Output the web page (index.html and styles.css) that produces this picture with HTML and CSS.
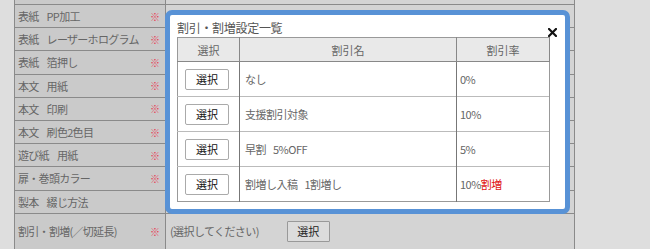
FILE: index.html
```html
<!DOCTYPE html>
<html lang="ja">
<head>
  <meta charset="UTF-8">
  <title>割引・割増設定一覧</title>
  <link rel="stylesheet" href="styles.css">
</head>
<body>
  <div class="sheet">
    <div class="row stub"><div class="label"></div><div class="value"></div></div>
    <div class="row"><div class="label">表紙<span class="gap"></span>PP加工<span class="req">※</span></div><div class="value"></div></div>
    <div class="row"><div class="label">表紙<span class="gap"></span>レーザーホログラム<span class="req">※</span></div><div class="value"></div></div>
    <div class="row"><div class="label">表紙<span class="gap"></span>箔押し<span class="req">※</span></div><div class="value"></div></div>
    <div class="row"><div class="label">本文<span class="gap"></span>用紙<span class="req">※</span></div><div class="value"></div></div>
    <div class="row"><div class="label">本文<span class="gap"></span>印刷<span class="req">※</span></div><div class="value"></div></div>
    <div class="row"><div class="label">本文<span class="gap"></span>刷色2色目<span class="req">※</span></div><div class="value"></div></div>
    <div class="row"><div class="label">遊び紙<span class="gap"></span>用紙<span class="req">※</span></div><div class="value"></div></div>
    <div class="row"><div class="label">扉・巻頭カラー<span class="req">※</span></div><div class="value"></div></div>
    <div class="row"><div class="label">製本<span class="gap"></span>綴じ方法</div><div class="value"></div></div>
    <div class="row last">
      <div class="label">割引・割増(／切延長)<span class="req">※</span></div>
      <div class="value">(選択してください)<button class="pick-btn">選択</button></div>
    </div>
  </div>

  <!-- 割引・割増の選択ダイアログ -->
  <div class="modal">
    <div class="modal-title">割引・割増設定一覧</div>
    <span class="close">
      <svg width="9" height="9" viewBox="0 0 9 9"><path d="M1 1 L8 8 M8 1 L1 8" stroke="#111" stroke-width="2.2" stroke-linecap="square"/></svg>
    </span>
    <table class="rate-table">
      <tr>
        <th class="col-sel">選択</th>
        <th class="col-name">割引名</th>
        <th class="col-rate">割引率</th>
      </tr>
      <tr>
        <td class="col-sel"><button class="sel-btn">選択</button></td>
        <td>なし</td>
        <td class="rate">0%</td>
      </tr>
      <tr>
        <td class="col-sel"><button class="sel-btn">選択</button></td>
        <td>支援割引対象</td>
        <td class="rate">10%</td>
      </tr>
      <tr>
        <td class="col-sel"><button class="sel-btn">選択</button></td>
        <td>早割<span class="gap"></span>5%OFF</td>
        <td class="rate">5%</td>
      </tr>
      <tr>
        <td class="col-sel"><button class="sel-btn">選択</button></td>
        <td>割増し入稿<span class="gap"></span>1割増し</td>
        <td class="rate">10%<span class="up">割増</span></td>
      </tr>
    </table>
  </div>
</body>
</html>
```

FILE: styles.css
```css
body {
  margin: 0;
  background-color: #dedede;
  font-family: "Noto Sans CJK JP", "Liberation Sans", sans-serif;
  font-size: 11px;
  color: #666;
  overflow: hidden;
}

.gap {
  display: inline-block;
  width: 8px;
}

.sheet {
  margin-left: 14px;
  width: 561px;
  box-sizing: border-box;
  border-left: 1px solid #8a8a8a;
  border-right: 1px solid #8a8a8a;
  background-color: #d4d4d4;
}

.row {
  display: grid;
  grid-template-columns: 151px 1fr;
  height: 22.2px;
  border-bottom: 1px solid #8a8a8a;
}

.row.stub {
  height: 4px;
}

.row.last {
  height: 35px;
}

.label {
  background-color: #cacaca;
  border-right: 1px solid #8a8a8a;
  display: flex;
  align-items: center;
  padding: 0 5px 0 3px;
  letter-spacing: -0.7px;
  white-space: nowrap;
}

.req {
  margin-left: auto;
  color: #e83a52;
  font-size: 10px;
  letter-spacing: 0;
}

.value {
  display: flex;
  align-items: center;
  padding-left: 4px;
  letter-spacing: -0.6px;
}

.pick-btn {
  margin-left: 28px;
  width: 43px;
  height: 21px;
  padding: 0;
  background-color: #dcdcdc;
  border: 1px solid #999;
  border-radius: 1px;
  font-family: inherit;
  font-size: 11px;
  color: #222;
}

/* ダイアログ */
.modal {
  position: absolute;
  left: 165px;
  top: 10px;
  width: 405px;
  height: 204px;
  box-sizing: border-box;
  border: 5px solid #5892d6;
  border-radius: 7px;
  background-color: #fff;
  padding: 3px 0 0 7px;
}

.modal-title {
  font-size: 12px;
  line-height: 19px;
  color: #555;
  letter-spacing: -0.3px;
}

.close {
  position: absolute;
  left: 378px;
  top: 13px;
  line-height: 0;
}

.rate-table {
  border-collapse: collapse;
  width: 373px;
  table-layout: fixed;
  border: 1px solid #999;
}

.rate-table th {
  height: 23px;
  padding: 0;
  background-color: #e9e9e9;
  font-weight: normal;
  color: #666;
  border-bottom: 1px solid #888;
  border-right: 1px solid #888;
}

.rate-table td {
  height: 34px;
  padding: 0 0 0 5px;
  border-top: 1px solid #bbb;
  border-right: 1px solid #777;
  color: #666;
  letter-spacing: -0.5px;
}

.rate-table td .gap {
  width: 7px;
}

.rate-table .col-sel {
  width: 61px;
}

.rate-table .col-rate {
  width: 92px;
}

.rate-table td.col-sel {
  padding: 0 0 0 7px;
}

.rate-table td.rate {
  padding-left: 3px;
  border-right: 1px solid #999;
}

.sel-btn {
  width: 44px;
  height: 21px;
  padding: 0;
  background-color: #fff;
  border: 1px solid #aaa;
  border-radius: 2px;
  font-family: inherit;
  font-size: 11px;
  color: #111;
}

.up {
  color: #e01010;
}
```
